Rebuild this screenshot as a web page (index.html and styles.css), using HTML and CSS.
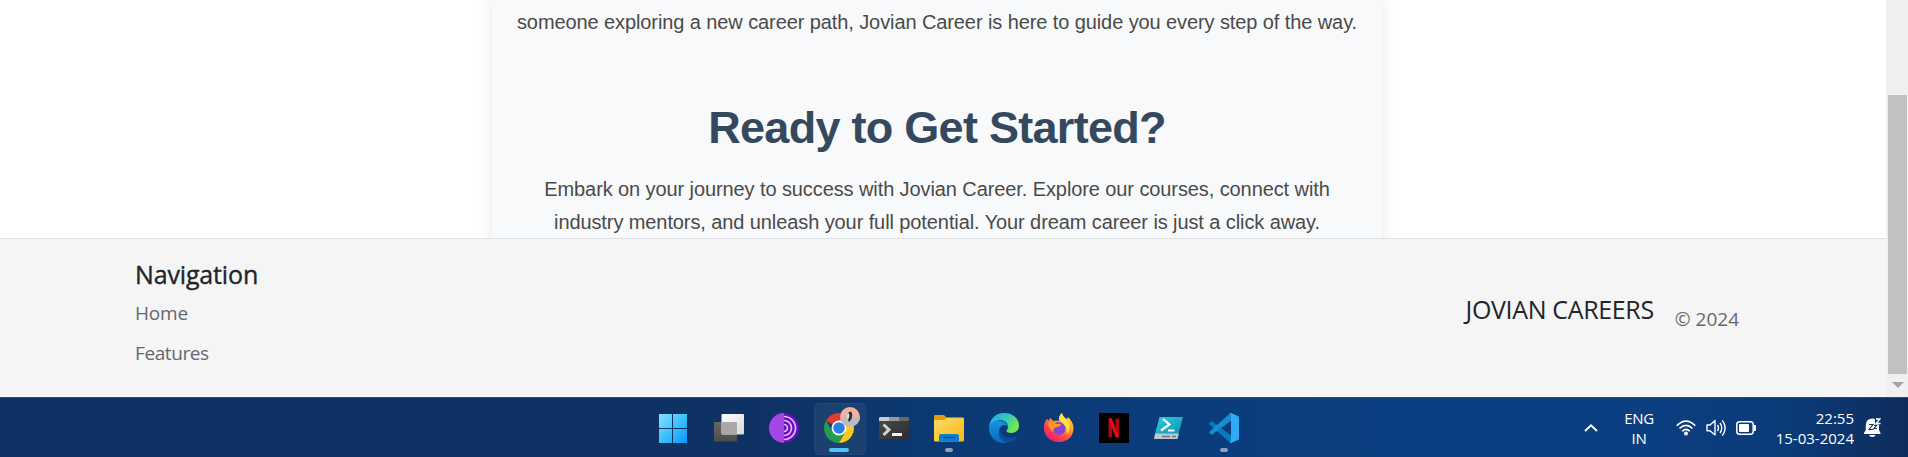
FILE: index.html
```html
<!DOCTYPE html>
<html lang="en">
<head>
<meta charset="utf-8">
<title>Jovian Careers</title>
<link rel="stylesheet" href="styles.css">
</head>
<body>
<div class="browser">
  <div class="page">
    <main class="content">
      <section class="card">
        <p class="copy intro"><span class="line l1">someone exploring a new career path, Jovian Career is here to guide you every step of the way.</span></p>
        <h1 class="heading"><span>Ready to Get Started?</span></h1>
        <p class="copy"><span class="line l2">Embark on your journey to success with Jovian Career. Explore our courses, connect with</span><span class="line l3">industry mentors, and unleash your full potential. Your dream career is just a click away.</span></p>
      </section>
    </main>
    <footer class="footer">
      <nav class="nav">
        <h2 class="nav-title">Navigation</h2>
        <a class="nav-link home">Home</a>
        <a class="nav-link">Features</a>
      </nav>
      <div class="brand"><span class="brand-name">JOVIAN CAREERS</span><span class="copyright">© 2024</span></div>
    </footer>
  </div>
  <div class="scrollbar">
    <div class="thumb"></div>
    <svg class="down" width="12" height="6" viewBox="0 0 12 6"><path d="M0 0H12L6 6Z" fill="#a3a3a3"/></svg>
  </div>
</div>
<div class="taskbar">
  <div class="apps">
    <div class="app"><svg class="icon" viewBox="1.5 0 30 30">
      <defs><linearGradient id="win" gradientUnits="userSpaceOnUse" x1="0" y1="1" x2="30" y2="30"><stop offset="0" stop-color="#8ae3ff"/><stop offset=".5" stop-color="#3cc3fb"/><stop offset="1" stop-color="#0a94f8"/></linearGradient></defs>
      <path fill="url(#win)" d="M.5 1h14v14H.5zM15.500 1h14v14h-14zM.5 16h14v14H.5zM15.500 16h14v14h-14z"/></svg></div>
    <div class="app"><svg class="icon" viewBox="0 0 30 30">
      <defs><linearGradient id="tv" x2="1" y2="1"><stop stop-color="#fff"/><stop offset="1" stop-color="#d9d9d9"/></linearGradient><linearGradient id="tg" x2="0" y2="1"><stop stop-color="#666"/><stop offset="1" stop-color="#4c4c4c"/></linearGradient></defs>
      <rect y="9" width="23" height="19.500" rx="1" fill="url(#tg)"/><rect x="7.500" y="1" width="22.500" height="20.500" rx="1" fill="url(#tv)"/><path d="M7.500 9H22a1 1 0 0 1 1 1V21.500H8.500a1 1 0 0 1-1-1z" fill="#a8a8a8"/></svg></div>
    <div class="app"><svg class="icon" viewBox="0 0 30 30">
      <circle cx="15" cy="15" r="15" fill="#6a0cc0"/><path d="M15 0a15 15 0 0 0 0 30z" fill="#a346e4"/>
      <g fill="none" stroke="#dfb8f5" stroke-width="1.700"><path d="M15 3.500a11.500 11.500 0 0 1 0 23"/><path d="M15 7.500a7.500 7.500 0 0 1 0 15"/><path d="M15 11.500a3.500 3.500 0 0 1 0 7"/></g></svg></div>
    <div class="app active"><svg class="icon" viewBox="0 0 30 30">
      <path d="M15 15 2.010 7.500A15 15 0 0 1 27.990 7.500L15 7.500Z" fill="#e33b2e"/>
      <path d="M2.010 7.500A15 15 0 0 0 15 30L21.500 18.750 8.500 18.750Z" fill="#249b4e"/>
      <path d="M27.990 7.500A15 15 0 0 1 15 30L21.500 18.750 15 7.500Z" fill="#fcc819"/>
      <circle cx="15" cy="15" r="7.500" fill="#fff"/><circle cx="15" cy="15" r="5.800" fill="#2b7de9"/></svg>
      <svg class="avatar" viewBox="0 0 20 20"><circle cx="10" cy="10" r="10" fill="#eeb1a4"/><path d="M.5 12Q8 10 19.900 11A10 10 0 0 1 .5 12" fill="#b8bdc5"/><path d="M8 6Q11 3 12 6Q13 12 9 15L8 13Q10 9 9 7Z" fill="#382f31"/><path d="M7.500 8 9 6.500 9 9 7.500 13Z" fill="#f3e9e5"/></svg>
      <span class="mark wide"></span></div>
    <div class="app"><svg class="icon" viewBox="0 0 30 30">
      <defs><linearGradient id="term" x2="1" y2="1"><stop stop-color="#4b4b4b"/><stop offset="1" stop-color="#2d2d2d"/></linearGradient></defs>
      <rect y="4" width="30" height="22" rx="1" fill="url(#term)"/><path d="M1 4h9v4H0V5z" fill="#ccc"/><path d="M10 4h10v4H10z" fill="#999"/><path d="M20 4h9l1 1v3H20z" fill="#666"/>
      <path d="M4.500 11.500 10 16.700 4.500 22" fill="none" stroke="#d2d2d2" stroke-width="3"/><rect x="13" y="20" width="10" height="3" fill="#f0f0f0"/></svg></div>
    <div class="app"><svg class="icon" viewBox="0 0 30 30">
      <defs><linearGradient id="fold" x2="1" y2="1"><stop stop-color="#ffdb67"/><stop offset="1" stop-color="#f8b817"/></linearGradient></defs>
      <path d="M0 3Q0 2 1 2H10L13 5H29V13H0Z" fill="#e19d0b"/><path d="M0 7H10L13 4.500H29Q30 4.500 30 6V27Q30 28.500 29 28.500H1Q0 28.500 0 27Z" fill="url(#fold)"/>
      <path d="M5 28.500V23Q5 21 7 21H23Q25 21 25 23V28.500Z" fill="#0c7ccb"/><path d="M9 24.500H21" stroke="#084c87" stroke-width="1.200"/></svg><span class="mark"></span></div>
    <div class="app"><svg class="icon" viewBox="0 0 30 30">
      <defs><linearGradient id="ed1" x2="1" y2=".4"><stop stop-color="#1ca9e6"/><stop offset=".55" stop-color="#31c5c3"/><stop offset="1" stop-color="#70e94b"/></linearGradient><linearGradient id="ed2" x2="0" y2="1"><stop stop-color="#1693dd"/><stop offset="1" stop-color="#086bbd"/></linearGradient></defs>
      <path d="M0 15C.5 6 6.500 0 15 0C24 0 30 6 30 12.500C30 17.500 26.500 20 22.500 20C19.500 20 17.500 19 17.500 18C17.500 17 19 16.500 19 14C19 9 14 6.500 9 7.500C4.500 8.400 1 11.500 0 15Z" fill="url(#ed1)"/>
      <path d="M0 15C1 10 5 7.500 9.500 7.500C14.500 7.500 18.500 10.500 18.800 14C17 11.200 13 11 11 15C8 21 12 28 19 29.500C8.500 32 0 25 0 15Z" fill="url(#ed2)"/>
      <path d="M11.500 14C10 19 14 24.500 20 24.700C23.500 24.800 26 23.300 28 22.700C28.500 22.700 28.700 23 28.400 23.500C26 27 22.500 29.500 18 29.500C10.500 28.500 7.500 19 11.500 14Z" fill="#0d4d91"/></svg></div>
    <div class="app"><svg class="icon" viewBox="0 0 30 30">
      <defs><linearGradient id="fx" x1=".9" y1="0" x2=".2" y2="1"><stop stop-color="#fff04c"/><stop offset=".35" stop-color="#ffa727"/><stop offset=".68" stop-color="#ff464b"/><stop offset="1" stop-color="#e91474"/></linearGradient></defs>
      <path d="M3 6Q4 6 5 8L6 5Q8 6 9 8Q13 7 15 8Q14 3 18 0Q19 4 23 6L24 4Q30 10 29.500 16C29 24 23 29 15 29C6 29 0 23 0 15Q0 9 3 6Z" fill="url(#fx)"/><circle cx="15" cy="15.500" r="6.500" fill="#8742d6"/><path d="M4 10Q9 7 12 11L17 11Q17 13 13 14Q8 15 10 19Q5 17 4 10Z" fill="#ff9829"/><path d="M18 0Q19 5 24 8Q28 14 23 21Q23 12 17 9Q13 4 18 0Z" fill="#ffe045"/></svg></div>
    <div class="app"><svg class="icon" viewBox="0 0 30 30">
      <path d="M0 0H30V30H0Z" fill="#000"/><path d="M9.500 5.500h3.500V24l-3.500.5zM16.500 5.500H20V24.500L16.500 24z" fill="#b30710"/><path d="M9.500 5.500H13L20 24.500 16.500 24Z" fill="#e50c19"/></svg></div>
    <div class="app"><svg class="icon" viewBox="0 0 30 30">
      <defs><linearGradient id="ps" x2="1" y2="1"><stop stop-color="#35c9d6"/><stop offset="1" stop-color="#0994b8"/></linearGradient></defs>
      <path d="M5.500 4H29L24.500 21H1Z" fill="url(#ps)"/><path d="M1 20.500H25L23.500 26H0Z" fill="#b9c8cd"/><path d="M8 23.500h8M18 23.500h4" stroke="#687b83" stroke-width="1.700"/><path d="M9 6 15.500 11.500 7 17.500M14 17.500H20.500" fill="none" stroke="#fff" stroke-width="2.200"/></svg></div>
    <div class="app"><svg class="icon" viewBox="0 0 30 30">
      <path d="M0 10.500 2 8.500Q3 8 4 9L23 23V30L21.500 30 .5 11.500Q0 11 0 10.500Z" fill="#0879be"/><path d="M0 19.500 2 21.500Q3 22 4 21L23 7V0H21.500L.5 18.500Q0 19 0 19.500Z" fill="#168dd2"/><path d="M22 0 29 3Q30 3.500 30 4.500V25.500Q30 26.500 29 27L22 30Q21 30 20.500 29.500Q22 29 22 27.500V2.500Q22 1 20.500.5Q21 0 22 0Z" fill="#30aaf4"/></svg><span class="mark"></span></div>
  </div>
  <div class="tray">
    <svg class="chevron" width="14" height="8" viewBox="0 0 14 8"><path d="M1 7 7 1.300 13 7" fill="none" stroke="#fff" stroke-width="1.900"/></svg>
    <div class="lang"><span>ENG</span><span>IN</span></div>
    <svg class="wifi" width="20" height="16" viewBox="0 0 20 16" fill="none" stroke="#fff" stroke-width="1.600"><path d="M.7 5.700Q10-3.300 19.300 5.700M3.500 8.500Q10 2.200 16.500 8.500M6.200 11.300Q10 7.500 13.800 11.300"/><circle cx="10" cy="13.500" r="2" fill="#fff" stroke="none"/></svg>
    <svg class="sound" width="21" height="18" viewBox="0 0 21 18" fill="none" stroke="#fff" stroke-width="1.400"><path d="M1 6H4L9 1.500V16L4 11.800H1Z" stroke-linejoin="round"/><path d="M11.500 6Q13.500 9 11.500 12M14 3.800Q17.500 9 14 14.200M16.300 1.300Q22 9 16.300 16.700"/></svg>
    <svg class="battery" width="20" height="14" viewBox="0 0 20 14"><rect x=".8" y=".8" width="16.400" height="12.400" rx="2.800" fill="none" stroke="#fff" stroke-width="1.500"/><rect x="3" y="3" width="10" height="8" rx="1" fill="#fff"/><path d="M18 4h1q1 0 1 1v4q0 1-1 1h-1z" fill="#fff"/></svg>
    <div class="clock"><span>22:55</span><span>15-03-2024</span></div>
    <svg class="bell" width="17" height="19" viewBox="0 0 17 19"><path d="M1.800 7Q2 .5 8.500.5Q14.500 1 15 7V12L16.500 15V16H0V15L1.800 12Z" fill="#fff"/><path d="M5 17H11.500Q11 19 8.300 19Q5.500 19 5 17Z" fill="#fff"/><path d="M11 0H17V6.500H11Z" fill="#0c3670"/><path d="M12 1H16L12 5.500H16.500" fill="none" stroke="#fff" stroke-width="1.300"/><path d="M5 6.500H9L5 11.500H9.500M10 7.500H12.500L10 10.500H13" fill="none" stroke="#0c3670" stroke-width="1.100"/></svg>
  </div>
</div>
</body>
</html>
```
FILE: styles.css
```css
* { box-sizing: border-box; }
body { margin: 0; width: 1908px; height: 457px; overflow: hidden; display: flex; flex-direction: column; background: #fff; }
h1, h2, p { margin: 0; font-weight: inherit; }

.browser { height: 397px; display: grid; grid-template-columns: 1886px 22px; }
.page { display: flex; flex-direction: column; min-width: 0; }
.content { height: 238px; overflow: hidden; display: flex; justify-content: center; padding-right: 12px; }
.card { width: 890px; height: 300px; background: #f8f9fb; box-shadow: 0 0 15px rgba(0, 0, 0, .1); text-align: center; padding-top: 6px; font-family: "Liberation Sans", Arial, sans-serif; }
.copy { font-size: 20px; line-height: 33px; color: #4a4a4a; letter-spacing: -.095px; }
.line { display: block; white-space: nowrap; }
.heading { font-size: 45px; line-height: 54px; font-weight: 700; color: #34495e; padding-top: 62px; margin-bottom: 18px; white-space: nowrap; letter-spacing: -.72px; }

.footer { height: 159px; border-top: 1px solid #dee2e6; background: #f5f5f5; display: flex; justify-content: space-between; padding: 20px 147px 0 135px; font-family: "Open Sans", "Segoe UI", sans-serif; }
.nav { display: flex; flex-direction: column; align-items: flex-start; }
.nav-title { font-size: 25px; line-height: 30px; font-weight: 500; color: #212529; letter-spacing: -.15px; -webkit-text-stroke: .35px #212529; }
.nav-link { font-size: 19px; line-height: 30px; color: #62686e; margin-top: 10px; letter-spacing: -.4px; }
.home { margin-top: 9px; letter-spacing: -.2px; }
.brand { display: flex; align-items: baseline; height: 60px; margin-top: 33px; white-space: nowrap; }
.brand-name { font-size: 25px; line-height: 35px; color: #212529; letter-spacing: -.35px; margin-right: 21px; }
.copyright { font-size: 19px; line-height: 30px; color: #62686e; position: relative; top: 7px; }

.scrollbar { background: #f0f0f0; display: flex; flex-direction: column; padding: 95px 1px 0 2px; }
.thumb { height: 279px; background: #c1c1c1; }
.down { margin: 8px 0 0 4px; }

.taskbar { height: 60px; border-top: 1px solid #294b79; display: flex; padding-left: 646.5px; background: linear-gradient(90deg, #0e3264 0, #0e3264 40%, #0b3973 49%, #0b3c7b 60%, #0b3e80 72%, #0b3f82 86%, #0b3a79 94%, #0e2c5b 100%); }
.apps { display: flex; align-items: center; width: 605px; }
.app { position: relative; width: 55px; height: 50px; display: flex; align-items: center; justify-content: center; flex: none; }
.active::before { content: ""; position: absolute; left: 2.5px; top: 0; width: 50px; height: 50px; border: 1px solid #25487a; border-radius: 5px; background: #1c406f; }
.icon { width: 30px; height: 30px; position: relative; }
.avatar { position: absolute; left: 28.5px; top: 4px; width: 20px; height: 20px; }
.mark { position: absolute; bottom: 1px; left: 23.500px; width: 8px; height: 4px; border-radius: 2px; background: #8f9fbe; }
.mark.wide { left: 17.500px; width: 20px; background: #4cc2ff; }

.tray { flex: 1; display: flex; align-items: center; color: #fff; font-family: "Open Sans", "Segoe UI", sans-serif; font-size: 15px; line-height: 20px; white-space: nowrap; }
.tray svg { flex: none; }
.chevron { margin-left: 332.5px; }
.lang { display: flex; flex-direction: column; align-items: center; width: 32px; margin-left: 25px; letter-spacing: -.3px; }
.wifi { margin-left: 21px; }
.sound { margin-left: 10px; }
.battery { margin-left: 9px; }
.clock { width: 79px; margin-left: 19px; display: flex; flex-direction: column; align-items: flex-end; }
.bell { margin-left: 10px; }
```
